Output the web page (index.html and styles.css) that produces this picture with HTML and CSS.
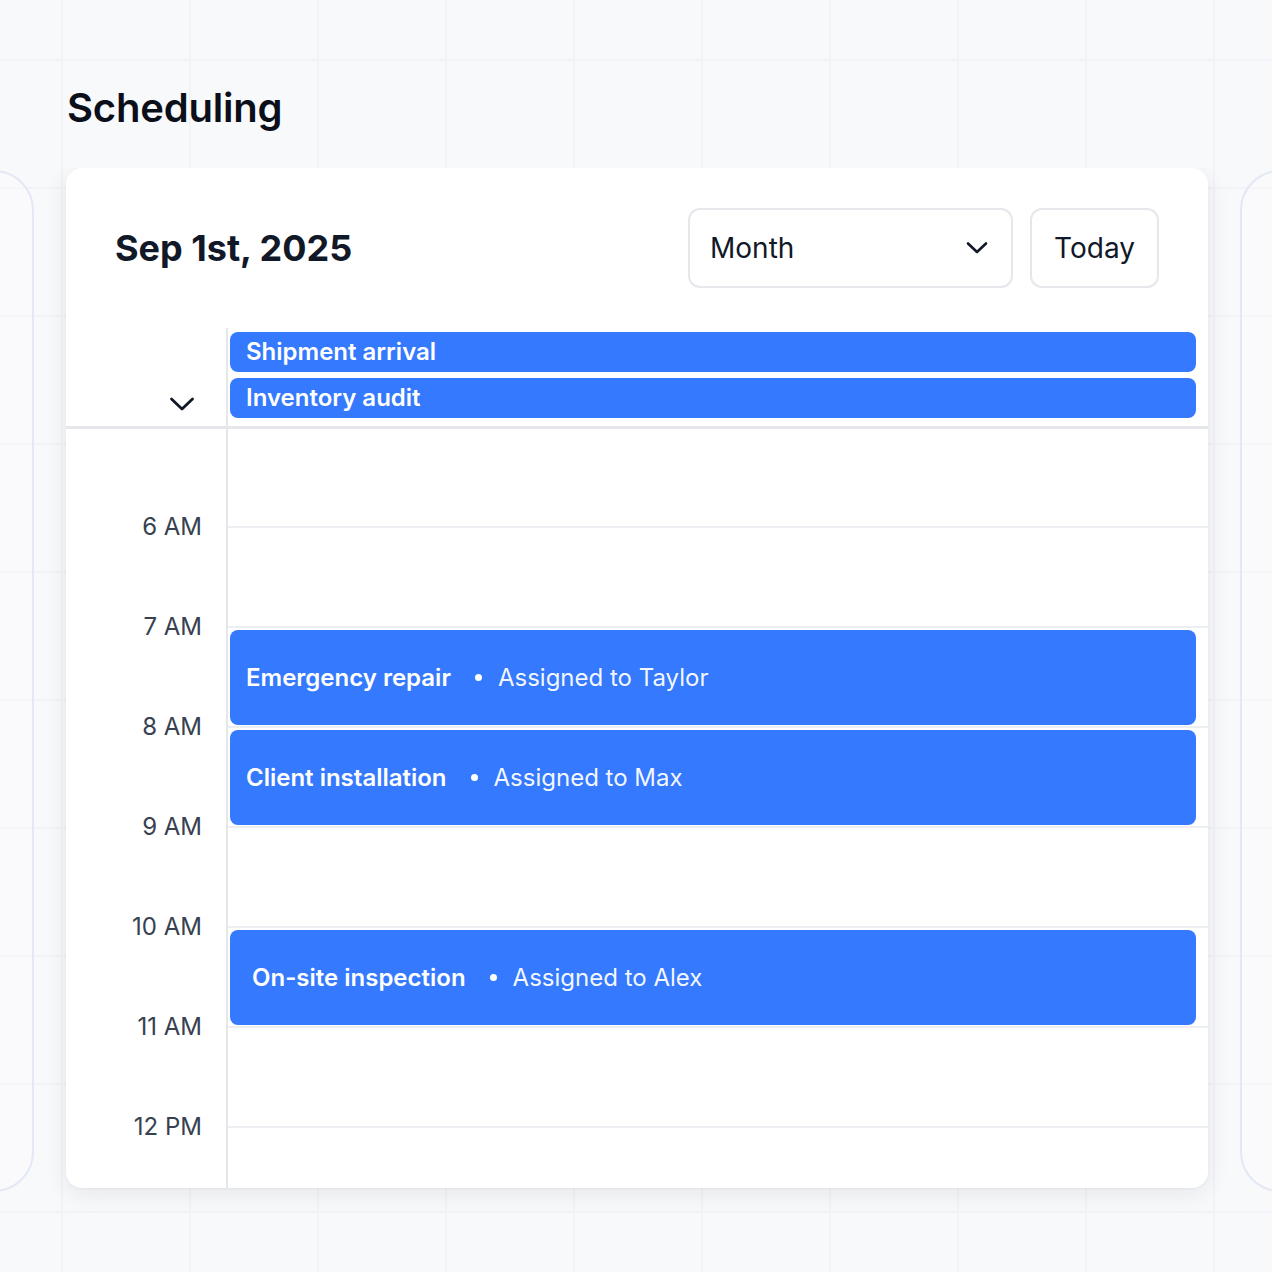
FILE: index.html
```html
<!DOCTYPE html>
<html lang="en">
<head>
<meta charset="utf-8">
<title>Scheduling</title>
<link rel="stylesheet" href="styles.css">
</head>
<body>
<main class="page">
  <h1 class="page-title">Scheduling</h1>
  <div class="carousel">
    <div class="ghost-card"></div>
    <section class="card">
      <header class="card-header">
        <h2 class="date">Sep 1st, 2025</h2>
        <div class="controls">
          <button class="select" type="button">
            <span>Month</span>
            <svg class="select-chevron" width="22" height="14" viewBox="0 0 22 14" fill="none"><path d="M2 2.5 L11 11 L20 2.5" stroke="#111827" stroke-width="2.6" stroke-linecap="round" stroke-linejoin="round"/></svg>
          </button>
          <button class="btn" type="button">Today</button>
        </div>
      </header>
      <div class="allday">
        <div class="allday-gutter">
          <svg width="26" height="16" viewBox="0 0 26 16" fill="none"><path d="M2.5 3 L13 13 L23.5 3" stroke="#111827" stroke-width="2.8" stroke-linecap="round" stroke-linejoin="round"/></svg>
        </div>
        <div class="allday-events">
          <div class="allday-bar">Shipment arrival</div>
          <div class="allday-bar">Inventory audit</div>
        </div>
      </div>
      <div class="timegrid">
        <div class="labels">
          <div class="label">6 AM</div>
          <div class="label">7 AM</div>
          <div class="label">8 AM</div>
          <div class="label">9 AM</div>
          <div class="label">10 AM</div>
          <div class="label">11 AM</div>
          <div class="label">12 PM</div>
        </div>
        <div class="day">
          <div class="slot slot-first"></div>
          <div class="slot"></div>
          <div class="slot"><div class="event"><span class="event-title">Emergency repair</span><span class="dot"></span><span class="event-sub">Assigned to Taylor</span></div></div>
          <div class="slot"><div class="event"><span class="event-title">Client installation</span><span class="dot"></span><span class="event-sub">Assigned to Max</span></div></div>
          <div class="slot"></div>
          <div class="slot"><div class="event event-wide"><span class="event-title">On-site inspection</span><span class="dot"></span><span class="event-sub">Assigned to Alex</span></div></div>
          <div class="slot"></div>
          <div class="slot"></div>
        </div>
      </div>
    </section>
    <div class="ghost-card"></div>
  </div>
</main>
</body>
</html>
```
FILE: styles.css
```css
* { box-sizing: border-box; }
html, body { margin: 0; padding: 0; }
body {
  width: 1272px;
  height: 1272px;
  overflow: hidden;
  font-family: Inter, "Noto Sans", "Liberation Sans", sans-serif;
  background-color: #f8f9fb;
  background-image:
    linear-gradient(to right, #f2f3f6 0, #f2f3f6 2px, transparent 2px),
    linear-gradient(to bottom, #f2f3f6 0, #f2f3f6 2px, transparent 2px);
  background-size: 128px 128px, 128px 128px;
  background-position: 61px 0, 0 59px;
  color: #111827;
}
.page {
  padding-top: 84px;
}
.page-title {
  margin: 0 0 36px 67px;
  font-size: 40px;
  line-height: 48px;
  font-weight: 600;
  color: #0b0f19;
  letter-spacing: -0.2px;
}
.carousel {
  display: flex;
  justify-content: center;
  gap: 32px;
  width: 1272px;
  padding: 0 0 40px 2px;
  overflow: hidden;
}
.ghost-card {
  flex: 0 0 1142px;
  height: 1022px;
  margin-top: 2px;
  border: 2px solid #e4e7f4;
  border-radius: 40px;
  background: rgba(255,255,255,0.25);
}
.card {
  flex: 0 0 1142px;
  height: 1020px;
  background: #fff;
  border-radius: 16px;
  box-shadow: 0 6px 24px rgba(17, 24, 39, 0.08), 0 1px 3px rgba(17,24,39,0.04);
  overflow: hidden;
  display: flex;
  flex-direction: column;
}
.card-header {
  display: flex;
  align-items: center;
  justify-content: space-between;
  padding: 40px 49px 40px 49px;
  height: 160px;
}
.date {
  margin: 0;
  font-size: 36px;
  font-weight: 700;
  color: #111827;
  letter-spacing: 0;
}
.controls {
  display: flex;
  gap: 17px;
}
.select, .btn {
  height: 80px;
  background: #fff;
  border: 2px solid #e5e7eb;
  border-radius: 12px;
  font-family: inherit;
  font-size: 28px;
  color: #111827;
  display: flex;
  align-items: center;
}
.select {
  width: 325px;
  padding: 0 23px 0 20px;
  justify-content: space-between;
}
.btn {
  width: 129px;
  justify-content: center;
  padding: 0;
}
.allday {
  display: flex;
  height: 101px;
  border-bottom: 3px solid #e5e7eb;
}
.allday-gutter {
  width: 162px;
  flex: 0 0 162px;
  border-right: 2px solid #e5e7eb;
  display: flex;
  align-items: flex-end;
  justify-content: flex-end;
  padding: 0 31px 14px 0;
}
.allday-events {
  flex: 1;
  display: flex;
  flex-direction: column;
  gap: 6px;
  padding: 4px 12px 0 2px;
}
.allday-bar {
  height: 40px;
  background: #3579fe;
  border-radius: 8px;
  color: #fff;
  font-size: 24px;
  font-weight: 600;
  line-height: 40px;
  padding-left: 16px;
}
.timegrid {
  flex: 1;
  display: flex;
  min-height: 0;
}
.labels {
  width: 162px;
  flex: 0 0 162px;
  border-right: 2px solid #e5e7eb;
  padding: 48px 24px 0 0;
}
.label {
  height: 100px;
  line-height: 100px;
  text-align: right;
  font-size: 24px;
  color: #374151;
}
.day {
  flex: 1;
  display: flex;
  flex-direction: column;
}
.slot {
  flex: 0 0 100px;
  border-bottom: 2px solid #eceef1;
  padding: 2px 12px 1px 2px;
  display: flex;
}
.slot-first {
  flex-basis: 99px;
}
.event {
  flex: 1;
  background: #3579fe;
  border-radius: 8px;
  color: #fff;
  font-size: 24px;
  display: flex;
  align-items: center;
  padding-left: 16px;
}
.event-wide {
  padding-left: 22px;
}
.event-title {
  font-weight: 600;
}
.dot {
  width: 7px;
  height: 7px;
  border-radius: 50%;
  background: #fff;
  margin: 0 16px 0 24px;
}
.event-sub {
  font-weight: 400;
  color: rgba(255,255,255,0.96);
}
```
